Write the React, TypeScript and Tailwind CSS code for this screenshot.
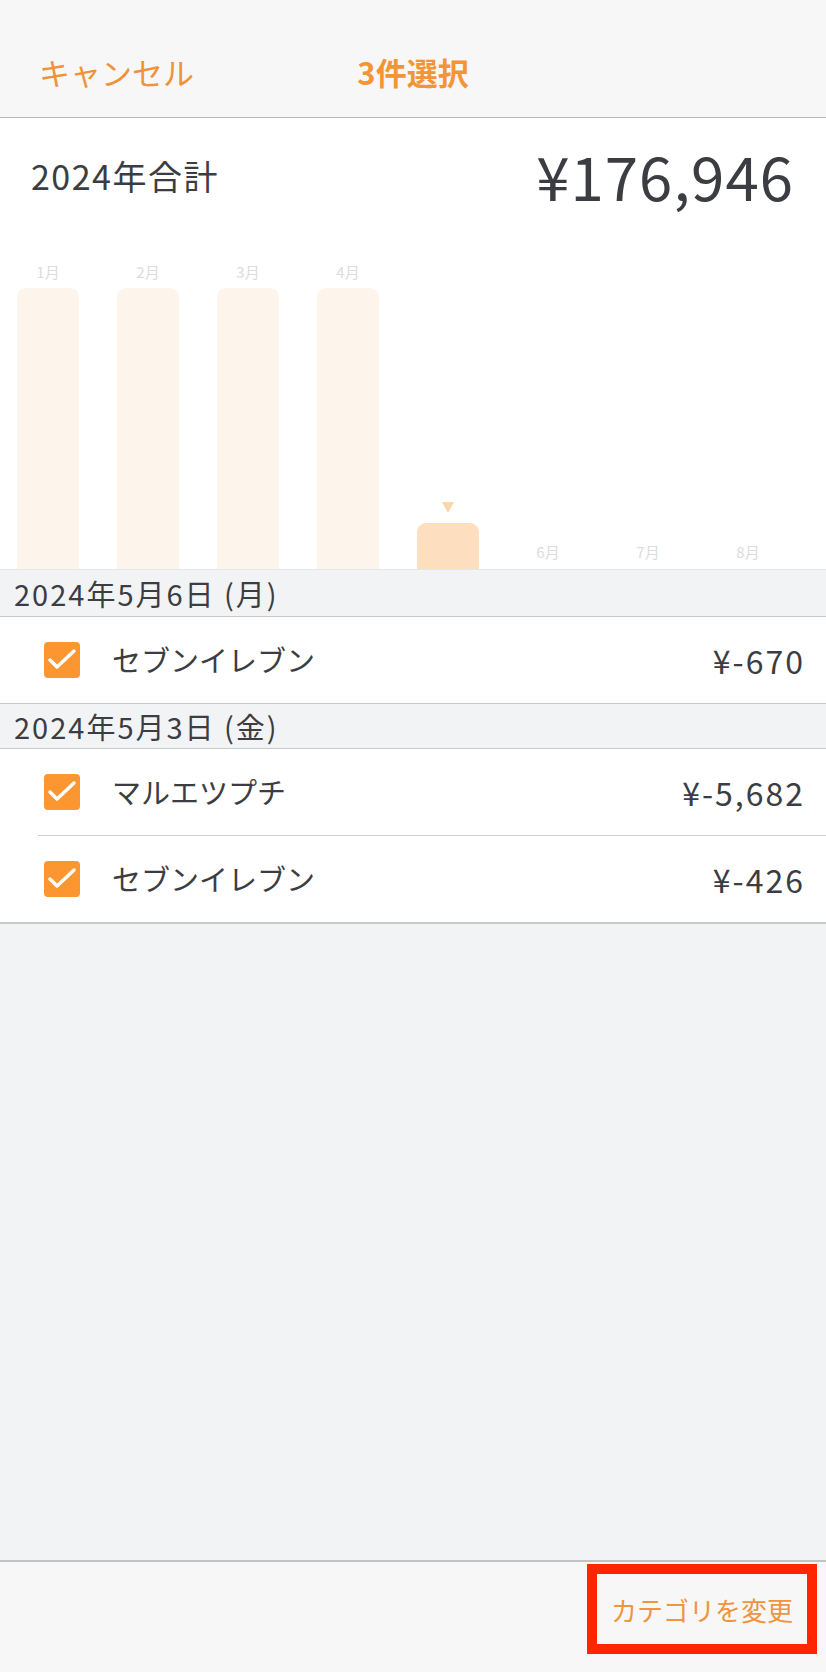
const FONT = "font-['Noto_Sans_CJK_JP','Noto_Sans',sans-serif]";

const months = [
  { label: "1月", h: 281 },
  { label: "2月", h: 281 },
  { label: "3月", h: 281 },
  { label: "4月", h: 281 },
  { label: "5月", h: 46, selected: true },
  { label: "6月", h: 0 },
  { label: "7月", h: 0 },
  { label: "8月", h: 0 },
];

function Check() {
  return (
    <div className="w-[36px] h-[36px] rounded-[4px] bg-[#fb9630] flex items-center justify-center shrink-0">
      <svg width="36" height="36" viewBox="0 0 36 36" fill="none">
        <polyline points="6,18 13,25 30,9" stroke="#fff" strokeWidth="3.5" strokeLinecap="round" strokeLinejoin="round" />
      </svg>
    </div>
  );
}

function Row({ name, amount, divider }: { name: string; amount: string; divider?: boolean }) {
  return (
    <div className="bg-white">
      <div className="h-[86px] flex items-center pl-[44px] pr-[21px]">
        <Check />
        <span className="ml-[32px] text-[29px] text-[#3b3d42]">{name}</span>
        <span className="ml-auto text-[32px] tracking-[2px] text-[#3b3d42]">{amount}</span>
      </div>
      {divider && <div className="ml-[38px] h-px bg-[#cfcfcf]" />}
    </div>
  );
}

function DateHeader({ text, h }: { text: string; h: string }) {
  return (
    <div className={`${h} bg-[#f2f3f5] border-b border-[#c9c9cb] flex items-center px-[14px]`}>
      <span className="text-[29px] tracking-[2px] text-[#3b3d42] leading-none">{text}</span>
    </div>
  );
}

export default function App() {
  return (
    <div className={`${FONT} w-[826px] h-[1672px] flex flex-col bg-[#f2f3f5]`}>
      {/* nav */}
      <div className="h-[118px] bg-[#f7f7f7] border-b border-[#b9b9b9] grid grid-cols-3 items-start pt-[52px]">
        <span className="pl-[39px] text-[31px] text-[#f0923a] leading-[40px]">キャンセル</span>
        <span className="text-center text-[31px] font-bold text-[#f39435] leading-[40px]">3件選択</span>
        <span />
      </div>

      {/* summary + chart */}
      <div className="bg-white">
        <div className="h-[114px] flex items-center justify-between pl-[31px] pr-[32px]">
          <span className="text-[34px] tracking-[1.5px] text-[#3b3d42]">2024年合計</span>
          <span className="text-[60px] tracking-[1px] text-[#3b3d42] leading-none">¥176,946</span>
        </div>
        <div className="h-[338px] flex items-end gap-[38px] pl-[17px] border-b border-[#e6e6e8]">
          {months.map((m) => (
            <div key={m.label} className="w-[62px] h-full flex flex-col items-center justify-end">
              {m.selected ? (
                <svg width="12" height="11" viewBox="0 0 12 11" className="mb-[10px]">
                  <polygon points="0,0 12,0 6,11" fill="#fcd5a8" />
                </svg>
              ) : (
                <span className={`text-[15px] leading-[17px] text-[#dcdcdc] ${m.h ? "mb-[8px]" : "mb-[9px]"}`}>{m.label}</span>
              )}
              {m.h > 0 && (
                <div
                  className={`w-full rounded-t-[9px] ${m.selected ? "bg-[#fddfc0]" : "bg-[#fdf4eb]"}`}
                  style={{ height: m.h }}
                />
              )}
            </div>
          ))}
        </div>
      </div>

      <DateHeader text="2024年5月6日 (月)" h="h-[47px]" />
      <div className="border-b border-[#c9c9cb]">
        <Row name="セブンイレブン" amount="¥-670" />
      </div>
      <DateHeader text="2024年5月3日 (金)" h="h-[45px]" />
      <div className="border-b-2 border-[#c9c9cb]">
        <Row name="マルエツプチ" amount="¥-5,682" divider />
        <Row name="セブンイレブン" amount="¥-426" />
      </div>

      <div className="flex-1" />

      {/* toolbar */}
      <div className="h-[112px] bg-[#f7f7f7] border-t-2 border-[#c2c2c4] flex justify-end pt-[2px] pr-[9px]">
        <div className="w-[230px] h-[90px] border-[10px] border-[#ff2600] flex items-center justify-center">
          <span className="text-[26px] text-[#f0943e]">カテゴリを変更</span>
        </div>
      </div>
    </div>
  );
}
